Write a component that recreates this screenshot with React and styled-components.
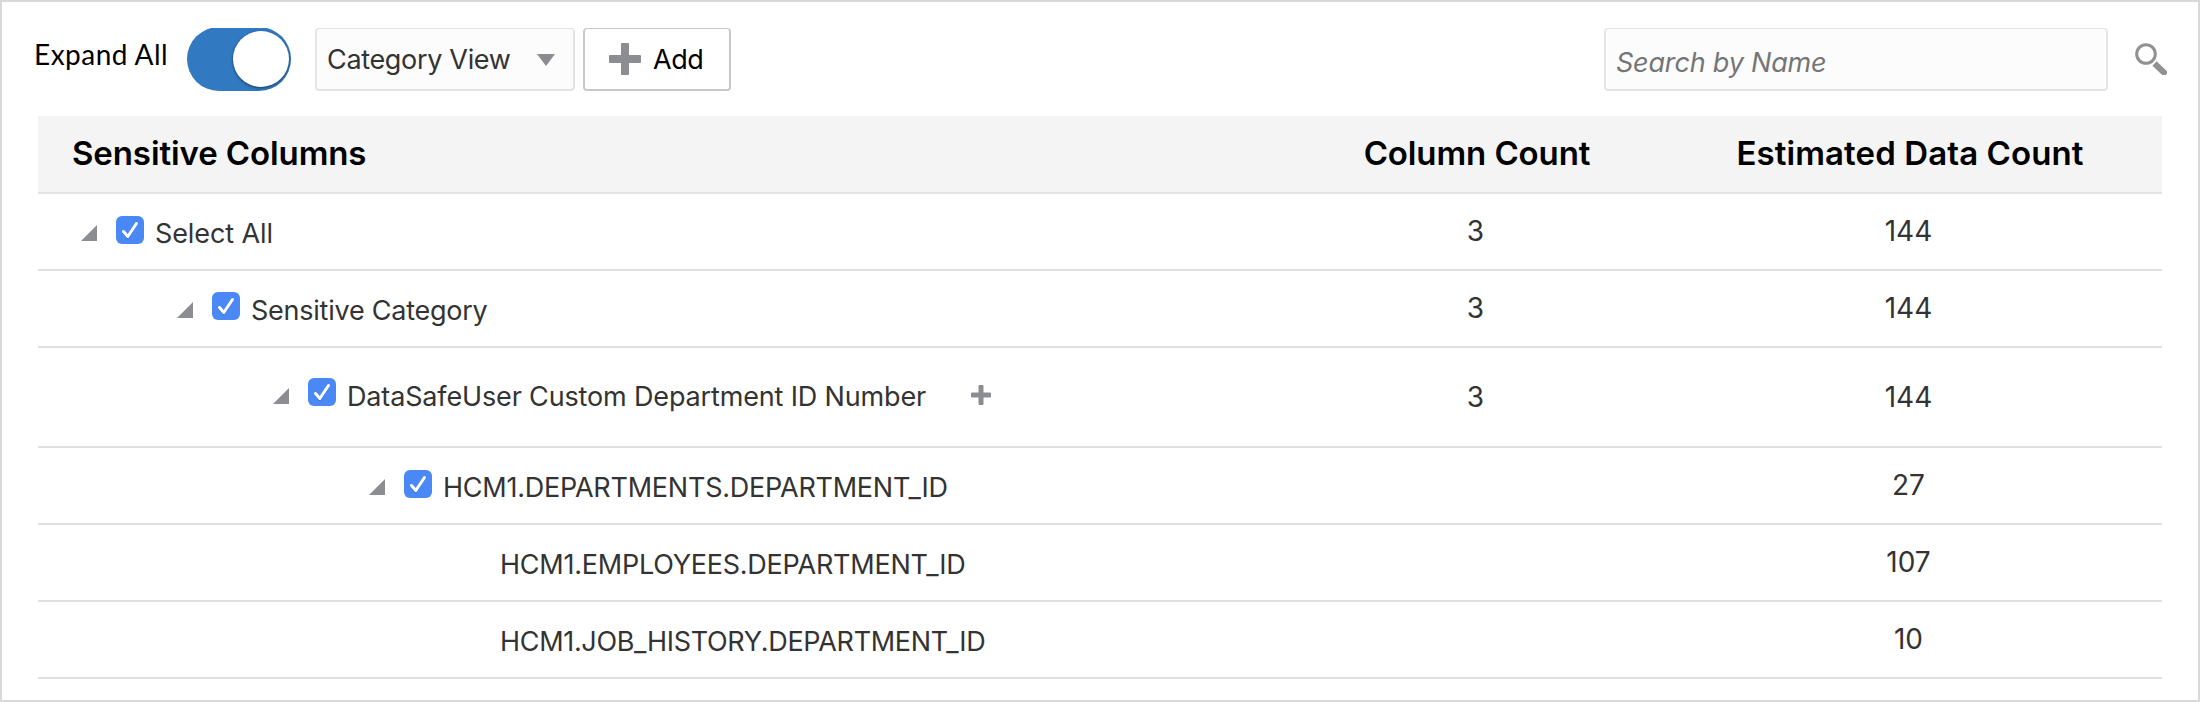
import React, { useState } from 'react';
import styled, { createGlobalStyle } from 'styled-components';

const GlobalStyle = createGlobalStyle`
  *, *::before, *::after { box-sizing: border-box; }
  body {
    margin: 0;
    background: #fff;
    font-family: Inter, "Liberation Sans", sans-serif;
    font-size: 27px;
    line-height: 32px;
    color: #333;
  }
`;

const Frame = styled.main`
  height: 702px;
  padding: 26px 31px 0 32px;
  border: 2px solid #d9d9d9;
  background: #fff;
`;

const Toolbar = styled.div`
  display: flex;
  align-items: flex-start;
  height: 88px;
`;

const ToggleLabel = styled.span`
  width: 153px;
  margin-top: 10px;
  color: #000;
  font-family: Lato, sans-serif;
  font-size: 28px;
  letter-spacing: 0.48px;
  white-space: nowrap;
`;

const Toggle = styled.button`
  flex: none;
  width: 104px;
  height: 63px;
  margin-right: 24px;
  padding: 0;
  border: 0;
  overflow: hidden;
  background: none;
`;

const ToggleTrack = styled.span`
  display: flex;
  justify-content: ${(p) => (p.$on ? 'flex-end' : 'flex-start')};
  align-items: center;
  height: 64px;
  margin-top: -1px;
  padding: 0 2px;
  border-radius: 32px;
  background: ${(p) => (p.$on ? '#3179c1' : '#bbb')};
`;

const ToggleKnob = styled.span`
  width: 56px;
  height: 56px;
  border-radius: 50%;
  background: #fff;
  box-shadow: 0 1px 3px rgba(0, 0, 0, 0.5);
`;

const ViewSelect = styled.button`
  display: flex;
  align-items: center;
  justify-content: space-between;
  width: 260px;
  height: 63px;
  margin-right: 8px;
  padding: 2px 18px 0 10px;
  border: 2px solid #e4e4e4;
  border-top-width: 1px;
  border-radius: 4px;
  background: #fcfcfc;
  color: #333;
  font: inherit;
  letter-spacing: -0.33px;
`;

const AddButton = styled.button`
  display: flex;
  align-items: center;
  gap: 12px;
  width: 148px;
  height: 63px;
  padding: 0 0 0 24px;
  border: 2px solid #c8c8c8;
  border-top-width: 1px;
  border-radius: 4px;
  background: #fff;
  color: #000;
  font: inherit;
  letter-spacing: -0.4px;
`;

const AddText = styled.span`
  padding-top: 2px;
`;

const SearchInput = styled.input`
  width: 504px;
  height: 63px;
  margin-left: auto;
  padding: 6px 10px 0 10px;
  border: 2px solid #e4e4e4;
  border-top-width: 1px;
  border-radius: 4px;
  outline: 0;
  background: #fcfcfc;
  color: #333;
  font: inherit;
  font-style: italic;
  letter-spacing: -0.19px;

  &::placeholder {
    color: #757575;
    opacity: 1;
  }
`;

const SearchButton = styled.button`
  display: flex;
  margin: 15px 0 0 27px;
  padding: 0;
  border: 0;
  background: none;
`;

const Table = styled.div`
  margin: 0 5px 0 4px;
`;

const TableRow = styled.div`
  display: grid;
  grid-template-columns: 1221px 433px 433px;
  height: ${(p) => (p.$tall ? 100 : 77)}px;
  padding-top: ${(p) => (p.$tall ? 9 : 0)}px;
  border-bottom: 2px solid #dfdfdf;
`;

const HeaderRow = styled(TableRow)`
  height: 78px;
  background: #f4f4f4;
  border-bottom-color: #e4e4e4;
`;

const HeaderCell = styled.div`
  padding-top: 17px;
  padding-left: ${(p) => (p.$first ? 34 : 3)}px;
  color: #000;
  font-size: 33px;
  font-weight: 600;
  line-height: 40px;
  letter-spacing: ${(p) => p.$track}px;
  text-align: ${(p) => (p.$first ? 'left' : 'center')};
`;

const TreeCell = styled.div`
  display: flex;
  align-items: flex-start;
  padding-left: ${(p) => 43 + p.$level * 96}px;
`;

const Expander = styled.svg`
  flex: none;
  width: 16px;
  height: 16px;
  margin: 31px 19px 0 0;
  fill: #8c8d90;
`;

const Checkbox = styled.svg`
  flex: none;
  width: 28px;
  height: 28px;
  margin: ${(p) => p.$top}px 11px 0 0;
`;

const NodeLabel = styled.span`
  margin-top: 24px;
  padding-left: ${(p) => (p.$leaf ? 35 : 0)}px;
  letter-spacing: ${(p) => p.$track}px;
  white-space: nowrap;
`;

const RowAddButton = styled.button`
  display: flex;
  margin: 28px 0 0 45px;
  padding: 0;
  border: 0;
  background: none;
`;

const CountCell = styled.div`
  padding-top: ${(p) => (p.$tall ? 24 : 21)}px;
  font-size: 28px;
  text-align: center;
`;

const PlusIcon = ({ size, bar }) => (
  <svg width={size} height={size} viewBox={`0 0 ${size} ${size}`} fill="#8b8d92">
    <rect x={(size - bar) / 2} width={bar} height={size} rx="1" />
    <rect y={(size - bar) / 2} width={size} height={bar} rx="1" />
  </svg>
);

const CheckedBox = ({ top }) => (
  <Checkbox viewBox="0 0 28 28" $top={top}>
    <rect width="28" height="28" rx="6" fill="#4a88f5" />
    <path d="M7.5 16.5 L11.8 21.5 L20.5 8" fill="none" stroke="#2f64c4" strokeOpacity=".45" strokeWidth="3" strokeLinecap="round" strokeLinejoin="round" />
    <path d="M7.5 15.5 L11.8 20.5 L20.5 7.5" fill="none" stroke="#fff" strokeWidth="3" strokeLinecap="round" strokeLinejoin="round" />
  </Checkbox>
);

const nodes = [
  { label: 'Select All', level: 0, columns: 3, count: 144, track: -0.1, box: 22 },
  { label: 'Sensitive Category', level: 1, columns: 3, count: 144, track: -0.24, box: 21 },
  { label: 'DataSafeUser Custom Department ID Number', level: 2, columns: 3, count: 144, track: -0.15, box: 21, tall: true },
  { label: 'HCM1.DEPARTMENTS.DEPARTMENT_ID', level: 3, count: 27, track: -0.24, box: 22 },
  { label: 'HCM1.EMPLOYEES.DEPARTMENT_ID', level: 4, count: 107, track: -0.24, leaf: true },
  { label: 'HCM1.JOB_HISTORY.DEPARTMENT_ID', level: 4, count: 10, track: -0.32, leaf: true },
];

export default function App() {
  const [expanded, setExpanded] = useState(true);
  return (
    <>
      <GlobalStyle />
      <Frame>
        <Toolbar>
          <ToggleLabel>Expand All</ToggleLabel>
          <Toggle role="switch" aria-checked={expanded} onClick={() => setExpanded(!expanded)}>
            <ToggleTrack $on={expanded}>
              <ToggleKnob />
            </ToggleTrack>
          </Toggle>
          <ViewSelect>
            Category View
            <svg width="18" height="12" viewBox="0 0 18 12">
              <path d="M0 0H18L9 12Z" fill="#8b8c8f" />
            </svg>
          </ViewSelect>
          <AddButton>
            <PlusIcon size={32} bar={8} />
            <AddText>Add</AddText>
          </AddButton>
          <SearchInput placeholder="Search by Name" />
          <SearchButton>
            <svg width="32" height="32" viewBox="0 0 32 32" fill="none" stroke="#8f9193">
              <circle cx="11" cy="11" r="9.3" strokeWidth="3" />
              <path d="M19.5 20.5L31 31.5" strokeWidth="6" />
            </svg>
          </SearchButton>
        </Toolbar>
        <Table>
          <HeaderRow>
            <HeaderCell $first $track={-0.1}>Sensitive Columns</HeaderCell>
            <HeaderCell $track={-0.1}>Column Count</HeaderCell>
            <HeaderCell $track={0.1}>Estimated Data Count</HeaderCell>
          </HeaderRow>
          {nodes.map((node) => (
            <TableRow key={node.label} $tall={node.tall}>
              <TreeCell $level={node.level}>
                {!node.leaf && (
                  <>
                    <Expander viewBox="0 0 16 16">
                      <path d="M16 0V16H0Z" />
                    </Expander>
                    <CheckedBox top={node.box} />
                  </>
                )}
                <NodeLabel $leaf={node.leaf} $track={node.track}>{node.label}</NodeLabel>
                {node.tall && (
                  <RowAddButton>
                    <PlusIcon size={20} bar={5} />
                  </RowAddButton>
                )}
              </TreeCell>
              <CountCell $tall={node.tall}>{node.columns}</CountCell>
              <CountCell $tall={node.tall}>{node.count}</CountCell>
            </TableRow>
          ))}
        </Table>
      </Frame>
    </>
  );
}
